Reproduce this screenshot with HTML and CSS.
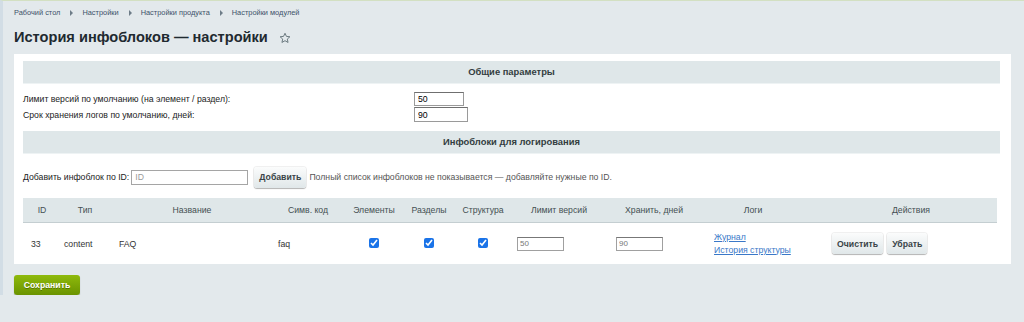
FILE: index.html
```html
<!DOCTYPE html>
<html lang="ru">
<head>
    <meta charset="UTF-8">
    <meta name="viewport" content="width=device-width, initial-scale=1.0">
    <title>История инфоблоков — настройки</title>
    <link rel="stylesheet" href="styles.css">
</head>
<body>
    <div class="page">
        <div class="crumbs">
            <a href="#">Рабочий стол</a><span class="sep"></span>
            <a href="#">Настройки</a><span class="sep"></span>
            <a href="#">Настройки продукта</a><span class="sep"></span>
            <a href="#">Настройки модулей</a>
        </div>

        <h1 class="title">История инфоблоков — настройки
            <svg class="star" width="12" height="12" viewBox="0 0 24 24"><path d="M12 2.5l2.9 6.3 6.9.7-5.2 4.6 1.5 6.8L12 17.4l-6.1 3.5 1.5-6.8-5.2-4.6 6.9-.7z" fill="none" stroke="#6b7a80" stroke-width="2" stroke-linejoin="round"/></svg>
        </h1>

        <form class="panel">
            <div class="section">Общие параметры</div>
            <div class="opts">
                <label>Лимит версий по умолчанию (на элемент / раздел):</label>
                <input class="num num-a" type="text" value="50">
                <label>Срок хранения логов по умолчанию, дней:</label>
                <input class="num num-b" type="text" value="90">
            </div>

            <div class="section">Инфоблоки для логирования</div>
            <div class="addrow">
                <label>Добавить инфоблок по ID:</label>
                <input class="idbox" type="text" placeholder="ID">
                <button type="button" class="btn">Добавить</button>
                <span class="hint">Полный список инфоблоков не показывается — добавляйте нужные по ID.</span>
            </div>

            <table class="list">
                <colgroup>
                    <col style="width:38px"><col style="width:48px"><col style="width:166px"><col style="width:66px">
                    <col style="width:66px"><col style="width:44px"><col style="width:64px"><col style="width:88px">
                    <col style="width:102px"><col style="width:96px"><col>
                </colgroup>
                <thead>
                    <tr>
                        <th>ID</th><th>Тип</th><th>Название</th><th>Симв. код</th>
                        <th>Элементы</th><th>Разделы</th><th>Структура</th><th>Лимит версий</th>
                        <th>Хранить, дней</th><th>Логи</th><th class="th-act">Действия</th>
                    </tr>
                </thead>
                <tbody>
                    <tr>
                        <td class="c-id">33</td>
                        <td class="c-type">content</td>
                        <td class="c-name">FAQ</td>
                        <td class="c-code">faq</td>
                        <td class="c-chk"><input type="checkbox" checked></td>
                        <td class="c-chk"><input type="checkbox" checked></td>
                        <td class="c-chk"><input type="checkbox" checked></td>
                        <td class="c-lim"><input class="cell-num" type="text" value="50"></td>
                        <td class="c-days"><input class="cell-num" type="text" value="90"></td>
                        <td class="c-logs"><a href="#">Журнал</a><br><a href="#">История структуры</a></td>
                        <td class="c-act"><button type="button" class="btn">Очистить</button><button type="button" class="btn">Убрать</button></td>
                    </tr>
                </tbody>
            </table>
        </form>

        <button type="button" class="save">Сохранить</button>
    </div>
</body>
</html>
```

FILE: styles.css
```css
body{
    margin: 0;
    background-color: #e3e9ec;
    font-family: "Liberation Sans", Arial, sans-serif;
    font-size: 8.7px;
    color: #222;
    border-top: 1px solid #d3e0c2;
    border-left: 3px solid #d2dde5;
}

.page{
    padding: 0 10px 0 11px;
}

.crumbs{
    display: flex;
    align-items: center;
    height: 21px;
    padding-top: 1px;
    font-size: 7.4px;
}
.crumbs a{
    color: #3d5269;
    text-decoration: none;
}
.sep{
    width: 0;
    height: 0;
    margin: 0 9px 0 10px;
    border-top: 3px solid transparent;
    border-bottom: 3px solid transparent;
    border-left: 3px solid #6e7d88;
}

.title{
    display: flex;
    align-items: center;
    gap: 11px;
    margin: 0;
    height: 28px;
    font-size: 14.6px;
    font-weight: bold;
    color: #1f2a30;
}
.star{
    margin-top: 1px;
}

.panel{
    margin: 3px 3px 0 0;
    padding: 7px 11px 0 9px;
    background-color: #fff;
}

.section{
    height: 22px;
    line-height: 22px;
    text-align: center;
    font-size: 9.4px;
    font-weight: bold;
    color: #333d40;
    background-color: #dfe7e9;
    border-bottom: 1px solid #eef3f4;
}

.opts{
    display: grid;
    grid-template-columns: 391px auto;
    align-items: center;
    row-gap: 1px;
    padding: 8px 0 9px;
}
.opts label{
    color: #222;
}

.num{
    height: 14px;
    padding: 0 3px;
    border: 1px solid #9a9a9a;
    border-top-color: #6f6f6f;
    font: 8.7px "Liberation Sans", Arial, sans-serif;
    box-sizing: border-box;
    color: #000;
}
.num-a{
    width: 50px;
}
.num-b{
    width: 54px;
    height: 15px;
}

.addrow{
    display: flex;
    align-items: center;
    height: 22px;
    padding: 12px 0 10px;
}
.idbox{
    width: 117px;
    height: 15px;
    margin: 0 6px 0 2px;
    padding: 0 3px;
    border: 1px solid #a5a5a5;
    box-sizing: border-box;
    font: 8.7px "Liberation Sans", Arial, sans-serif;
}
.idbox::placeholder{
    color: #999;
}
.hint{
    margin-left: 3px;
    color: #555;
}

.btn{
    height: 21px;
    padding: 0 5px;
    border: none;
    border-radius: 3px;
    background: linear-gradient(#fbfcfc, #e0e7e9);
    box-shadow: 0 1px 1px rgba(0,0,0,.25), 0 0 0 1px rgba(0,0,0,.06);
    font: bold 8.7px "Liberation Sans", Arial, sans-serif;
    color: #3a4448;
    cursor: pointer;
}

.list{
    width: 974px;
    table-layout: fixed;
    border-collapse: collapse;
}
.list th{
    height: 24px;
    padding: 0;
    font-weight: normal;
    text-align: center;
    color: #444f52;
    background-color: #dfe7e9;
    border-bottom: 1px solid #c4ced1;
    white-space: nowrap;
}
.list th.th-act{
    padding-left: 24px;
}
.list td{
    height: 41px;
    padding: 0;
    color: #333;
    white-space: nowrap;
}
.c-id{ padding-left: 8px !important; }
.c-type{ padding-left: 3px !important; }
.c-name{ padding-left: 10px !important; }
.c-code{ padding-left: 3px !important; }
.c-chk{ text-align: center; }
.c-chk input{
    width: 10px;
    height: 10px;
    margin: 0;
    accent-color: #1a73e8;
}
.c-lim{ padding-left: 2px !important; }
.c-days{ padding-left: 13px !important; }
.c-logs{
    padding-left: 9px !important;
    line-height: 13px;
}
.c-logs a{
    color: #3a78c8;
}
.c-act{
    padding-left: 31px !important;
}
.c-act .btn{
    margin-right: 4px;
}

.cell-num{
    width: 47px;
    height: 14px;
    padding: 0 2px;
    border: 1px solid #a0a0a0;
    border-top-color: #777;
    box-sizing: border-box;
    font: 8px "Liberation Sans", Arial, sans-serif;
    color: #777;
}

.save{
    margin-top: 11px;
    width: 66px;
    height: 20px;
    padding: 0;
    border: none;
    border-radius: 3px;
    background: linear-gradient(#8fba0c, #6a9300);
    box-shadow: 0 1px 1px rgba(0,0,0,.3);
    font: bold 8.7px "Liberation Sans", Arial, sans-serif;
    color: #fff;
    text-shadow: 0 1px 0 rgba(0,0,0,.3);
    cursor: pointer;
}
```
